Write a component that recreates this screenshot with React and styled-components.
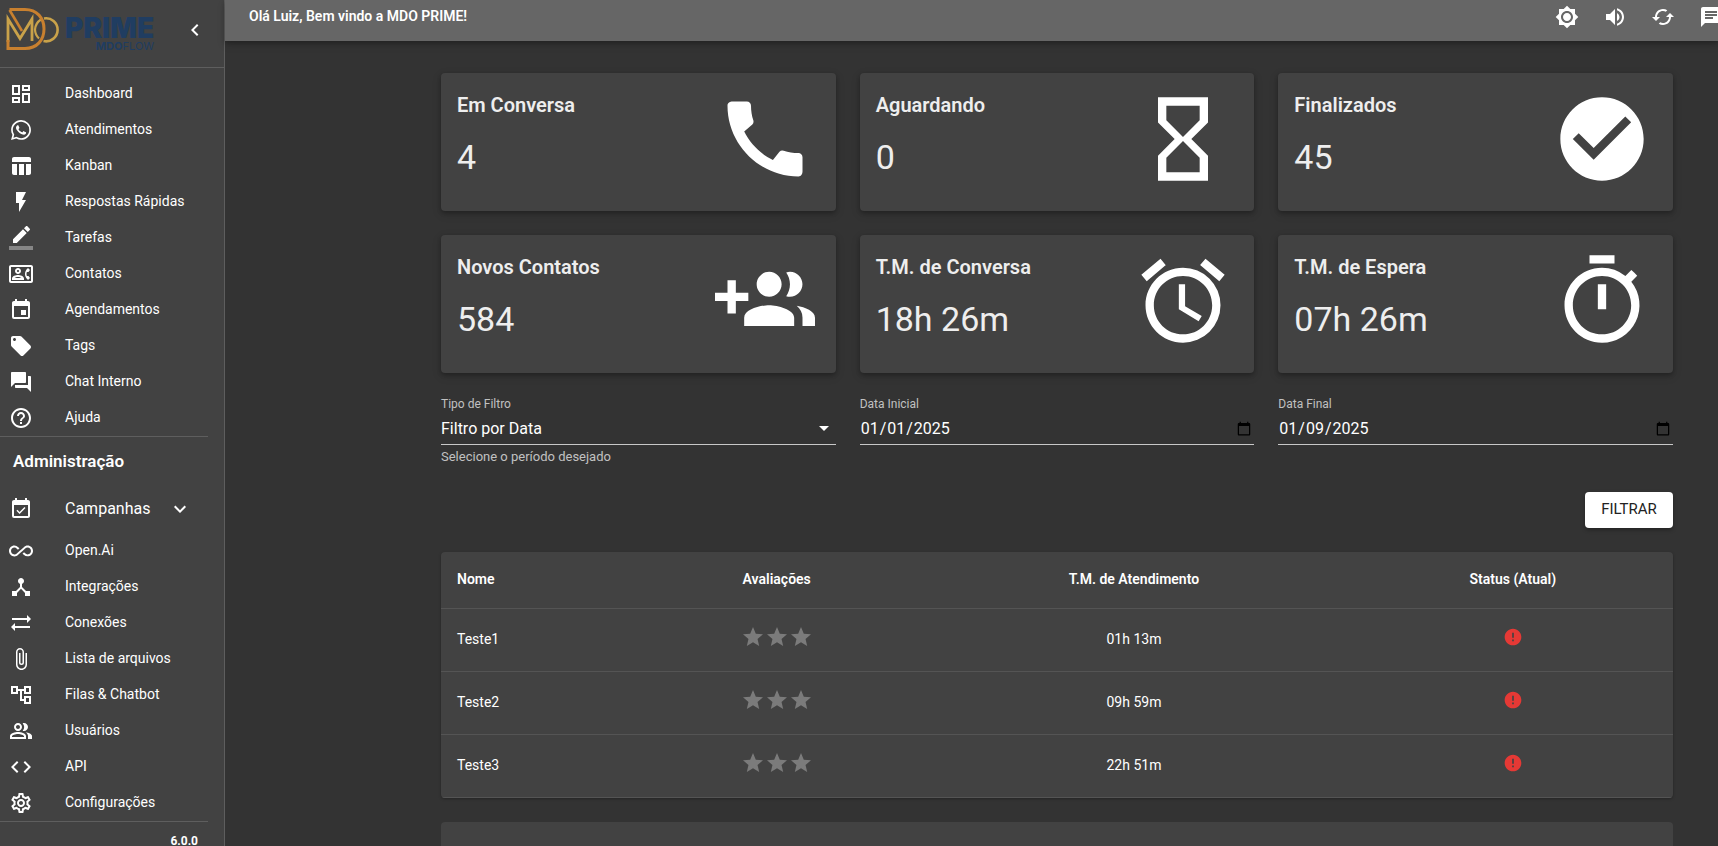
import { useState } from 'react'
import styled, { createGlobalStyle } from 'styled-components'
import {
  MdAccessAlarm,
  MdAllInclusive,
  MdArrowDropDown,
  MdAttachFile,
  MdBrightness7,
  MdCached,
  MdCall,
  MdChat,
  MdCheckCircle,
  MdChevronLeft,
  MdCode,
  MdDeviceHub,
  MdError,
  MdEvent,
  MdEventAvailable,
  MdExpandMore,
  MdFlashOn,
  MdForum,
  MdHelpOutline,
  MdHourglassEmpty,
  MdLocalOffer,
  MdOutlineAccountTree,
  MdOutlineContactPhone,
  MdOutlineDashboard,
  MdOutlinePeopleAlt,
  MdOutlineSettings,
  MdOutlineTimer,
  MdStar,
  MdSyncAlt,
  MdTableChart,
  MdVolumeUp,
  MdWhatsapp
} from 'react-icons/md'

const GlobalStyle = createGlobalStyle`
  * {
    box-sizing: border-box;
  }
  body {
    margin: 0;
    background-color: #333;
    color: #fff;
    font-family: Roboto, 'Liberation Sans', sans-serif;
    font-size: 14px;
    line-height: 20px;
  }
  h1, h2, h3, p {
    margin: 0;
  }
`
const Page = styled.div`
  display: flex;
  height: 100vh;
  overflow: hidden;
`
const Sidebar = styled.aside`
  flex: 0 0 225px;
  background-color: #424242;
  border-right: 1px solid #5e5e5e;
  overflow: hidden;
`
const SidebarHeader = styled.div`
  display: flex;
  align-items: center;
  justify-content: space-between;
  height: 68px;
  padding: 0 17px 8px 6px;
  border-bottom: 1px solid #5e5e5e;
`
const Logo = styled.div`
  display: flex;
  gap: 5px;
  color: #203d61;
  font-family: Inter, 'Open Sans', sans-serif;
`
const LogoText = styled.div`
  display: flex;
  flex-direction: column;
  align-items: flex-end;
  padding-top: 8px;
`
const LogoName = styled.span`
  font-size: 28px;
  font-weight: 900;
  line-height: 24px;
`
const LogoSub = styled.span`
  font-size: 11px;
  line-height: 12px;
`
const IconButton = styled.button`
  display: flex;
  padding: ${({ $pad }) => $pad}px;
  border: 0;
  background: none;
  color: #fff;
  font-size: 24px;
  cursor: pointer;
`
const Nav = styled.nav`
  padding: 8px 16px 0 0;
`
const NavItem = styled.a`
  display: flex;
  align-items: center;
  height: ${({ $large }) => $large ? 48 : 36}px;
  padding: 0 16px 0 9px;
  color: #fff;
  font-size: ${({ $large }) => $large ? 16 : 14}px;
  text-decoration: none;

  svg {
    flex-shrink: 0;
    font-size: 24px;
  }
`
const NavLabel = styled.span`
  flex: 1;
  padding: 0 0 ${({ $large }) => $large ? 0 : 2}px 32px;
`
const NavTitle = styled.h2`
  padding-left: 13px;
  border-top: 1px solid #5e5e5e;
  font-size: 17px;
  font-weight: 600;
  line-height: 48px;
`
const Version = styled.p`
  padding: 9px 10px 0 0;
  border-top: 1px solid #5e5e5e;
  font-size: 12px;
  font-weight: 700;
  text-align: right;
`
const Main = styled.main`
  flex: 1;
  min-width: 0;
`
const Topbar = styled.header`
  display: flex;
  align-items: center;
  height: 41px;
  padding: 0 0 7px 24px;
  overflow: hidden;
  background-color: #666;
`
const TopbarShadow = styled.div`
  position: relative;
  box-shadow: 0 2px 4px rgba(0, 0, 0, 0.2), 0 4px 8px rgba(0, 0, 0, 0.16);
`
const Welcome = styled.h1`
  flex: 1;
  padding-bottom: 2px;
  font-size: 14px;
  font-weight: 600;
`
const Actions = styled.div`
  display: flex;
  flex-shrink: 0;
  margin-right: -17px;
`
const Content = styled.div`
  display: flex;
  flex-direction: column;
  padding: 32px 45px 0 216px;
`
const Grid = styled.div`
  display: grid;
  grid-template-columns: repeat(3, 1fr);
  gap: 24px;
`
const Card = styled.section`
  display: flex;
  justify-content: space-between;
  height: 138px;
  padding: 16px 21px 16px 16px;
  border-radius: 4px;
  background-color: #424242;
  box-shadow: 0 2px 4px rgba(0, 0, 0, 0.24), 0 3px 10px rgba(0, 0, 0, 0.16);
  color: #eee;

  svg {
    color: #fff;
    font-size: 100px;
  }
`
const CardTitle = styled.h3`
  font-size: 20px;
  font-weight: 600;
  line-height: 32px;
`
const CardValue = styled.p`
  padding-top: 16px;
  font-size: 34px;
  line-height: 40px;
`
const Filters = styled(Grid)`
  padding-top: 22px;
`
const Field = styled.div`
  position: relative;
  display: flex;
  flex-direction: column;
`
const Label = styled.label`
  color: #c1c1c1;
  font-size: 12px;
  line-height: 18px;
`
const control = `
  width: 100%;
  height: 32px;
  padding: 0;
  border: 0;
  border-bottom: 1px solid #c8c8c8;
  border-radius: 0;
  background: transparent;
  color: #fff;
  font: 16px Roboto, 'Liberation Sans', sans-serif;
  outline: none;
`
const Select = styled.select`
  ${control}
  appearance: none;
`
const DateInput = styled.input`
  ${control}
`
const SelectArrow = styled(MdArrowDropDown)`
  position: absolute;
  top: 21px;
  right: 0;
  font-size: 24px;
  pointer-events: none;
`
const Helper = styled.p`
  padding-top: 2px;
  color: #c1c1c1;
  font-size: 13px;
`
const FilterButton = styled.button`
  align-self: flex-end;
  min-width: 88px;
  height: 36px;
  margin: 25px 0 24px;
  padding: 0 16px 2px;
  border: 0;
  border-radius: 4px;
  background-color: #fff;
  box-shadow: 0 2px 4px rgba(0, 0, 0, 0.3);
  color: #222;
  font: 400 15px Roboto, 'Liberation Sans', sans-serif;
  cursor: pointer;
`
const TablePaper = styled.div`
  border-radius: 4px;
  background-color: #424242;
  box-shadow: 0 1px 3px rgba(0, 0, 0, 0.3);
  overflow: hidden;
`
const Table = styled.table`
  width: 100%;
  border-collapse: separate;
  border-spacing: 0;
  table-layout: fixed;
`
const Th = styled.th`
  width: ${({ $width }) => $width};
  height: 57px;
  padding: 0 16px 2px;
  border-bottom: 1px solid #545454;
  font-weight: 600;
  text-align: ${({ $left }) => $left ? 'left' : 'center'};
`
const Td = styled.td`
  height: 63px;
  padding: 0 16px ${({ $icon }) => $icon ? 6 : 2}px;
  border-bottom: 1px solid #545454;
  text-align: ${({ $left }) => $left ? 'left' : 'center'};
`
const Stars = styled.div`
  display: flex;
  justify-content: center;
  color: #7b7b7b;
  font-size: 24px;
`
const StatusIcon = styled(MdError)`
  display: block;
  margin: 0 auto;
  color: #e53935;
  font-size: 20px;
`
const ChartPaper = styled.section`
  height: 240px;
  margin-top: 24px;
  padding: 16px;
  border-radius: 4px;
  background-color: #424242;
`
const ChartTitle = styled.h2`
  width: 50%;
  font-size: 20px;
  font-weight: 500;
  line-height: 32px;
  text-align: center;
`

const LogoMark = () => (
  <svg width="54" height="44" viewBox="0 0 54 44" fill="none">
    <path d="M38 10.5a11.5 11.5 0 1 1 -0.5 22.500" stroke="#c9a24a" strokeWidth="2.6" />
    <path d="M35 11.5a13 13 0 0 0 -6 10a13 13 0 0 0 4 9" stroke="#c9a24a" strokeWidth="2.2" />
    <path d="M2 34V11L14 30.5L26 11V33" stroke="#c9a24a" strokeWidth="2.8" />
    <path d="M3.5 1.5H19C31 1.5 38 10 38 21S31 40.5 19 40.5H2V32" stroke="#c8802f" strokeWidth="3" />
    <path d="M3.5 2L16 23" stroke="#c8802f" strokeWidth="2.6" />
  </svg>
)

const PencilIcon = () => (
  <svg width="24" height="24" viewBox="0 0 24 24" fill="currentColor">
    <path d="M17.75 7L14 3.25l-10 10V17h3.75l10-10zm2.96-2.96c.39-.39.39-1.02 0-1.41L18.37.29c-.39-.39-1.02-.39-1.41 0L15 2.25 18.75 6l1.96-1.96z" />
    <path fillOpacity=".36" d="M0 20h24v4H0z" />
  </svg>
)

const GroupAddIcon = () => (
  <svg width="1em" height="1em" viewBox="0 0 24 24" fill="currentColor">
    <path d="M8 10H5V7H3v3H0v2h3v3h2v-3h3v-2zm10 1c1.66 0 2.99-1.34 2.99-3S19.66 5 18 5c-.32 0-.63.05-.91.14.57.81.9 1.79.9 2.86s-.34 2.04-.9 2.86c.28.09.59.14.91.14zm-5 0c1.66 0 2.99-1.34 2.99-3S14.66 5 13 5c-1.66 0-3 1.34-3 3s1.34 3 3 3zm6.62 2.16c.83.73 1.38 1.66 1.38 2.84v2h3v-2c0-1.54-2.37-2.49-4.38-2.84zM13 13c-2 0-6 1-6 3v2h12v-2c0-2-4-3-6-3z" />
  </svg>
)

const mainLinks = [
  { label: 'Dashboard', Icon: MdOutlineDashboard },
  { label: 'Atendimentos', Icon: MdWhatsapp },
  { label: 'Kanban', Icon: MdTableChart },
  { label: 'Respostas Rápidas', Icon: MdFlashOn },
  { label: 'Tarefas', Icon: PencilIcon },
  { label: 'Contatos', Icon: MdOutlineContactPhone },
  { label: 'Agendamentos', Icon: MdEvent },
  { label: 'Tags', Icon: MdLocalOffer },
  { label: 'Chat Interno', Icon: MdForum },
  { label: 'Ajuda', Icon: MdHelpOutline }
]

const adminLinks = [
  { label: 'Campanhas', Icon: MdEventAvailable, large: true },
  { label: 'Open.Ai', Icon: MdAllInclusive },
  { label: 'Integrações', Icon: MdDeviceHub },
  { label: 'Conexões', Icon: MdSyncAlt },
  { label: 'Lista de arquivos', Icon: MdAttachFile },
  { label: 'Filas & Chatbot', Icon: MdOutlineAccountTree },
  { label: 'Usuários', Icon: MdOutlinePeopleAlt },
  { label: 'API', Icon: MdCode },
  { label: 'Configurações', Icon: MdOutlineSettings }
]

const actions = [
  { label: 'Tema', Icon: MdBrightness7 },
  { label: 'Volume', Icon: MdVolumeUp },
  { label: 'Atualizar', Icon: MdCached },
  { label: 'Mensagens', Icon: MdChat }
]

const cards = [
  { title: 'Em Conversa', value: '4', Icon: MdCall },
  { title: 'Aguardando', value: '0', Icon: MdHourglassEmpty },
  { title: 'Finalizados', value: '45', Icon: MdCheckCircle },
  { title: 'Novos Contatos', value: '584', Icon: GroupAddIcon },
  { title: 'T.M. de Conversa', value: '18h 26m', Icon: MdAccessAlarm },
  { title: 'T.M. de Espera', value: '07h 26m', Icon: MdOutlineTimer }
]

const attendants = [
  { name: 'Teste1', time: '01h 13m' },
  { name: 'Teste2', time: '09h 59m' },
  { name: 'Teste3', time: '22h 51m' }
]

const NavLinks = ({ links }) => links.map(({ label, Icon, large }) => (
  <NavItem key={label} href="#" $large={large}>
    <Icon />
    <NavLabel $large={large}>{label}</NavLabel>
    {large && <MdExpandMore />}
  </NavItem>
))

const Menu = () => (
  <Sidebar>
    <SidebarHeader>
      <Logo>
        <LogoMark />
        <LogoText>
          <LogoName>PRIME</LogoName>
          <LogoSub><b>MDO</b>FLOW</LogoSub>
        </LogoText>
      </Logo>
      <IconButton $pad={0} aria-label="Recolher menu"><MdChevronLeft /></IconButton>
    </SidebarHeader>
    <Nav>
      <NavLinks links={mainLinks} />
      <NavTitle>Administração</NavTitle>
      <NavLinks links={adminLinks} />
      <Version>6.0.0</Version>
    </Nav>
  </Sidebar>
)

const FilterFields = () => {
  const [start, setStart] = useState('2025-01-01')
  const [end, setEnd] = useState('2025-01-09')

  return (
    <Filters>
      <Field>
        <Label htmlFor="filterType">Tipo de Filtro</Label>
        <Select id="filterType">
          <option>Filtro por Data</option>
          <option>Filtro por Período</option>
        </Select>
        <SelectArrow />
        <Helper>Selecione o período desejado</Helper>
      </Field>
      <Field>
        <Label htmlFor="start">Data Inicial</Label>
        <DateInput id="start" type="date" value={start} onChange={e => setStart(e.target.value)} />
      </Field>
      <Field>
        <Label htmlFor="end">Data Final</Label>
        <DateInput id="end" type="date" value={end} onChange={e => setEnd(e.target.value)} />
      </Field>
    </Filters>
  )
}

const AttendantsTable = () => (
  <TablePaper>
    <Table>
      <thead>
        <tr>
          <Th $width="16%" $left>Nome</Th>
          <Th $width="22.5%">Avaliações</Th>
          <Th $width="35.5%">T.M. de Atendimento</Th>
          <Th $width="26%">Status (Atual)</Th>
        </tr>
      </thead>
      <tbody>
        {attendants.map(({ name, time }) => (
          <tr key={name}>
            <Td $left>{name}</Td>
            <Td $icon><Stars><MdStar /><MdStar /><MdStar /></Stars></Td>
            <Td>{time}</Td>
            <Td $icon><StatusIcon /></Td>
          </tr>
        ))}
      </tbody>
    </Table>
  </TablePaper>
)

const App = () => (
  <>
    <GlobalStyle />
    <Page>
      <Menu />
      <Main>
        <TopbarShadow>
          <Topbar>
            <Welcome>Olá Luiz, Bem vindo a MDO PRIME!</Welcome>
            <Actions>
              {actions.map(({ label, Icon }) => (
                <IconButton key={label} $pad={12} aria-label={label}><Icon /></IconButton>
              ))}
            </Actions>
          </Topbar>
        </TopbarShadow>
        <Content>
          <Grid>
            {cards.map(({ title, value, Icon }) => (
              <Card key={title}>
                <div>
                  <CardTitle>{title}</CardTitle>
                  <CardValue>{value}</CardValue>
                </div>
                <Icon />
              </Card>
            ))}
          </Grid>
          <FilterFields />
          <FilterButton>FILTRAR</FilterButton>
          <AttendantsTable />
          <ChartPaper>
            <ChartTitle>Gráfico Geral</ChartTitle>
          </ChartPaper>
        </Content>
      </Main>
    </Page>
  </>
)

export default App
